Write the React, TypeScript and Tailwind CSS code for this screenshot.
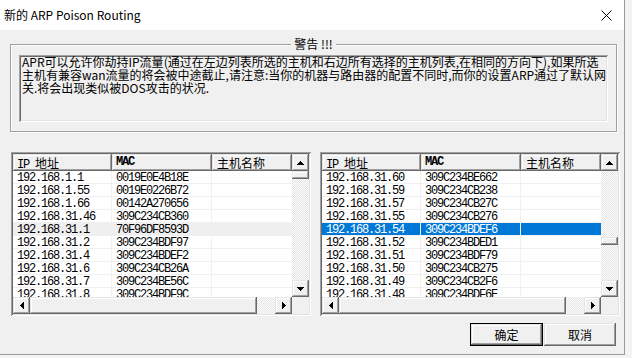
import React from "react";

const RAISED =
  "shadow-[inset_-1px_-1px_0_#696969,inset_1px_1px_0_#e3e3e3,inset_-2px_-2px_0_#a0a0a0,inset_2px_2px_0_#ffffff]";
const SUNKEN =
  "shadow-[inset_1px_1px_0_#a0a0a0,inset_-1px_-1px_0_#ffffff,inset_2px_2px_0_#696969,inset_-2px_-2px_0_#e3e3e3]";
const DITHER =
  "bg-[repeating-conic-gradient(#ffffff_0%_25%,#e3e3e3_0%_50%)] bg-size-[2px_2px]";

const leftRows: [string, string][] = [
  ["192.168.1.1", "0019E0E4B18E"],
  ["192.168.1.55", "0019E0226B72"],
  ["192.168.1.66", "00142A270656"],
  ["192.168.31.46", "309C234CB360"],
  ["192.168.31.1", "70F96DF8593D"],
  ["192.168.31.2", "309C234BDF97"],
  ["192.168.31.4", "309C234BDEF2"],
  ["192.168.31.6", "309C234CB26A"],
  ["192.168.31.7", "309C234BE56C"],
  ["192.168.31.8", "309C234BDF9C"],
];

const rightRows: [string, string][] = [
  ["192.168.31.60", "309C234BE662"],
  ["192.168.31.59", "309C234CB238"],
  ["192.168.31.57", "309C234CB27C"],
  ["192.168.31.55", "309C234CB276"],
  ["192.168.31.54", "309C234BDEF6"],
  ["192.168.31.52", "309C234BDED1"],
  ["192.168.31.51", "309C234BDF79"],
  ["192.168.31.50", "309C234CB275"],
  ["192.168.31.49", "309C234CB2F6"],
  ["192.168.31.48", "309C234BDF6E"],
];

function Arrow({ dir }: { dir: "up" | "down" | "left" | "right" }) {
  if (dir === "up")
    return (
      <svg width="7" height="4" viewBox="0 0 7 4" shapeRendering="crispEdges">
        <rect x="3" y="0" width="1" height="1" fill="#000" />
        <rect x="2" y="1" width="3" height="1" fill="#000" />
        <rect x="1" y="2" width="5" height="1" fill="#000" />
        <rect x="0" y="3" width="7" height="1" fill="#000" />
      </svg>
    );
  if (dir === "down")
    return (
      <svg width="7" height="4" viewBox="0 0 7 4" shapeRendering="crispEdges">
        <rect x="0" y="0" width="7" height="1" fill="#000" />
        <rect x="1" y="1" width="5" height="1" fill="#000" />
        <rect x="2" y="2" width="3" height="1" fill="#000" />
        <rect x="3" y="3" width="1" height="1" fill="#000" />
      </svg>
    );
  if (dir === "left")
    return (
      <svg width="4" height="7" viewBox="0 0 4 7" shapeRendering="crispEdges">
        <rect x="0" y="3" width="1" height="1" fill="#000" />
        <rect x="1" y="2" width="1" height="3" fill="#000" />
        <rect x="2" y="1" width="1" height="5" fill="#000" />
        <rect x="3" y="0" width="1" height="7" fill="#000" />
      </svg>
    );
  return (
    <svg width="4" height="7" viewBox="0 0 4 7" shapeRendering="crispEdges">
      <rect x="0" y="0" width="1" height="7" fill="#000" />
      <rect x="1" y="1" width="1" height="5" fill="#000" />
      <rect x="2" y="2" width="1" height="3" fill="#000" />
      <rect x="3" y="3" width="1" height="1" fill="#000" />
    </svg>
  );
}

function ScrollBtn({ dir }: { dir: "up" | "down" | "left" | "right" }) {
  return (
    <div
      className={`w-[17px] h-[17px] shrink-0 flex items-center justify-center bg-[#f0f0f0] ${RAISED}`}
    >
      <Arrow dir={dir} />
    </div>
  );
}

function ListView({
  rows,
  selected,
  hover,
  thumbOffset,
}: {
  rows: [string, string][];
  selected: number;
  hover: number;
  thumbOffset: number;
}) {
  return (
    <div className={`w-[300px] h-[164px] p-[2px] bg-white flex flex-col ${SUNKEN}`}>
      <div className="flex h-[143px]">
        <div className="w-[279px] flex flex-col">
          <div className="flex h-[17px] text-[12px] leading-[17px] text-black">
            <div className={`w-[99px] h-[17px] pl-[4px] bg-[#f0f0f0] ${RAISED}`}>
              <span className="font-['Liberation_Mono',monospace] tracking-[-1.2px]">IP </span>
              <span className="font-['Noto_Sans_CJK_SC',sans-serif]"> 地址</span>
            </div>
            <div
              className={`w-[100px] h-[17px] pl-[4px] bg-[#f0f0f0] font-['Liberation_Mono',monospace] font-bold tracking-[-1.2px] ${RAISED}`}
            >
              MAC
            </div>
            <div
              className={`w-[80px] h-[17px] pl-[5px] bg-[#f0f0f0] font-['Noto_Sans_CJK_SC',sans-serif] ${RAISED}`}
            >
              主机名称
            </div>
          </div>
          <div className="flex-1 overflow-hidden font-['Liberation_Mono',monospace] text-[12px] tracking-[-1.2px] leading-[12px]">
            {rows.map((r, i) => (
              <div
                key={i}
                className={`flex h-[13px] border-b border-[#f0f0f0] ${
                  i === selected
                    ? "bg-[#0078d7] text-white"
                    : i === hover
                    ? "bg-[#efefef] text-black"
                    : "text-black"
                }`}
              >
                <div className="w-[99px] pl-[4px] pt-[1px] border-r border-[#f0f0f0]">{r[0]}</div>
                <div className="w-[100px] pl-[4px] pt-[1px] border-r border-[#f0f0f0]">{r[1]}</div>
                <div className="flex-1" />
              </div>
            ))}
          </div>
        </div>
        <div className="w-[17px] flex flex-col">
          <ScrollBtn dir="up" />
          <div className={`flex-1 flex flex-col ${DITHER}`}>
            <div style={{ height: thumbOffset }} />
            <div className={`h-[8px] bg-[#f0f0f0] ${RAISED}`} />
          </div>
          <ScrollBtn dir="down" />
        </div>
      </div>
      <div className="flex h-[17px]">
        <ScrollBtn dir="left" />
        <div className={`w-[227px] h-[17px] bg-[#f0f0f0] ${RAISED}`} />
        <div className={`w-[18px] h-[17px] ${DITHER}`} />
        <ScrollBtn dir="right" />
        <div className="w-[17px] h-[17px] bg-[#f0f0f0]" />
      </div>
    </div>
  );
}

export default function App() {
  return (
    <div className="w-[632px] h-[358px] bg-[#f3f3f3] overflow-hidden">
      <div className="w-[625px] h-[355px] border-r border-b border-[#9a9a9a] flex flex-col bg-[#f0f0f0]">
        <div className="h-[30px] bg-white flex items-center justify-between pl-[4px] pr-[12px]">
          <span className="font-['Noto_Sans_CJK_SC',sans-serif] text-[12px] text-black">
            新的 ARP Poison Routing
          </span>
          <svg width="11" height="11" viewBox="0 0 11 11">
            <path d="M0.5 0.5 L10.5 10.5 M10.5 0.5 L0.5 10.5" stroke="#000" strokeWidth="1" fill="none" />
          </svg>
        </div>
        <div className="flex-1 flex flex-col">
          <div className="relative mt-[14px] ml-[10px] w-[607px] h-[88px] border border-[#a0a0a0] shadow-[inset_1px_1px_0_#ffffff,1px_1px_0_#ffffff] pt-[10px] px-[8px]">
            <div className="absolute left-0 right-0 -top-[8px] flex justify-center">
              <span className="bg-[#f0f0f0] px-[3px] font-['Noto_Sans_CJK_SC',sans-serif] text-[12px] leading-[14px] text-black">
                警告 !!!
              </span>
            </div>
            <div
              className={`h-[67px] bg-[#f0f0f0] pl-[3px] font-['Noto_Sans_CJK_SC',sans-serif] text-[12px] leading-[13px] text-black whitespace-nowrap overflow-hidden ${SUNKEN}`}
            >
              APR可以允许你劫持IP流量(通过在左边列表所选的主机和右边所有选择的主机列表,在相同的方向下),如果所选
              <br />
              主机有兼容wan流量的将会被中途截止,请注意:当你的机器与路由器的配置不同时,而你的设置ARP通过了默认网
              <br />
              关.将会出现类似被DOS攻击的状况.
            </div>
          </div>
          <div className="mt-[20px] ml-[11px] flex gap-[9px]">
            <ListView rows={leftRows} selected={-1} hover={4} thumbOffset={0} />
            <ListView rows={rightRows} selected={4} hover={-1} thumbOffset={66} />
          </div>
          <div className="mt-[7px] flex justify-end pr-[8px] gap-[1px] font-['Noto_Sans_CJK_SC',sans-serif] text-[12px] text-black">
            <div className="w-[73px] h-[23px] border border-[#000] flex">
              <div className={`flex-1 flex items-center justify-center bg-[#f0f0f0] ${RAISED}`}>确定</div>
            </div>
            <div className={`w-[72px] h-[23px] flex items-center justify-center bg-[#f0f0f0] ${RAISED}`}>
              取消
            </div>
          </div>
        </div>
      </div>
    </div>
  );
}
